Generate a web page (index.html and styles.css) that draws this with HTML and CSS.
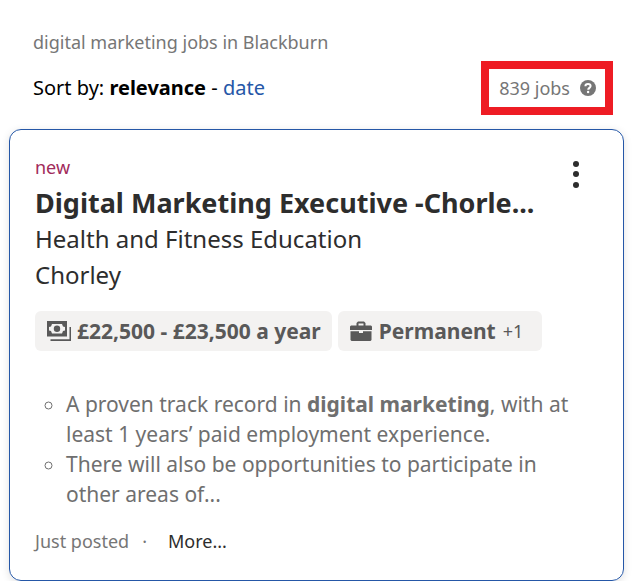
FILE: index.html
```html
<!doctype html>
<html lang="en">
<head>
<meta charset="utf-8">
<meta name="viewport" content="width=device-width, initial-scale=1.0">
<link rel="stylesheet" href="styles.css">
<title>digital marketing jobs in Blackburn</title>
</head>
<body>
<header class="results-header">
    <p class="search-title">digital marketing jobs in Blackburn</p>
    <div class="sort-row">
        <p class="sort">Sort by: <b>relevance</b> - <a href="#date">date</a></p>
        <div class="count">
            <span>839 jobs</span>
            <button class="icon-button" type="button" aria-label="Help">
                <svg width="16" height="16" viewBox="0 0 16 16">
                    <circle cx="8" cy="8" r="8" fill="#767676"/>
                    <path d="M5.400 6.200C5.400 4.600 6.500 3.900 8 3.900s2.600.8 2.600 2.200c0 1.700-2.400 1.900-2.400 3.700" fill="none" stroke="#fff" stroke-width="2"/>
                    <circle cx="8.100" cy="12" r="1.200" fill="#fff"/>
                </svg>
            </button>
        </div>
    </div>
</header>

<main class="job-card">
    <div class="job-top">
        <div class="job-heading">
            <span class="new">new</span>
            <h2 class="job-title">Digital Marketing Executive -Chorle...</h2>
            <p class="company">Health and Fitness Education</p>
            <p class="company">Chorley</p>
        </div>
        <button class="icon-button menu" type="button" aria-label="Job actions">
            <svg width="8" height="28" viewBox="0 0 8 28" fill="#2d2d2d">
                <circle cx="4" cy="4" r="3"/>
                <circle cx="4" cy="14" r="3"/>
                <circle cx="4" cy="25" r="3"/>
            </svg>
        </button>
    </div>

    <div class="tags">
        <div class="tag">
            <svg width="24" height="20" viewBox="0 0 24 20" fill="#595959">
                <path fill-rule="evenodd" d="M0 0h20v15.500H0zM5 3L4 5.500 2 6v3.500l2 .5L5 12.500h10l1-2.500 2-.5V6l-2-.5L15 3z"/>
                <circle cx="10" cy="7.700" r="3.200"/>
                <path d="M22.500 6H24v14H3.500v-1.800h19z"/>
            </svg>
            <b>£22,500 - £23,500 a year</b>
        </div>
        <div class="tag tag-type">
            <svg width="22" height="20" viewBox="0 0 22 20" fill="#595959">
                <path fill-rule="evenodd" d="M6.500 4.500V2L8 .5h6L15.500 2v2.500H21l1 1V9H0V5.500l1-1zM8.500 4.500h5v-2h-5z"/>
                <path d="M.5 10.300H9V12h4v-1.700h8.500V19l-1 1h-19l-1-1z"/>
            </svg>
            <b>Permanent</b>
            <span class="more-count">+1</span>
        </div>
    </div>

    <ul class="snippet">
        <li>A proven track record in <b>digital marketing</b>, with at least 1 years’ paid employment experience.</li>
        <li>There will also be opportunities to participate in other areas of...</li>
    </ul>

    <footer class="job-footer">
        <span>Just posted</span>
        <span>·</span>
        <button class="more" type="button">More...</button>
    </footer>
</main>
</body>
</html>
```
FILE: styles.css
```css
* {
    box-sizing: border-box;
}
body {
    margin: 0;
    padding: 30px 8px 0 9px;
    font-family: "Noto Sans", "Open Sans", sans-serif;
    font-size: 18px;
    line-height: 24px;
    color: #2d2d2d;
    background-color: #fff;
}
h2,
p,
ul {
    margin: 0;
    padding: 0;
}
button {
    padding: 0;
    border: 0;
    background: none;
    font: inherit;
    color: inherit;
    cursor: pointer;
}
svg {
    display: block;
    flex: none;
}
.results-header {
    padding: 0 11px 0 24px;
}
.search-title {
    color: #767676;
}
.sort-row {
    display: flex;
    justify-content: space-between;
    align-items: center;
    margin: 7px 0 14px;
}
.sort {
    font-size: 20px;
    line-height: 26px;
    color: #000;
}
.sort a {
    color: #2557a7;
    text-decoration: none;
}
.count {
    display: flex;
    align-items: center;
    gap: 10px;
    padding: 7px 9px 7px 10px;
    border: 8px solid #ee1c24;
    color: #767676;
}
.job-card {
    padding: 25px 25px 27px;
    border: 1px solid #2557a7;
    border-radius: 12px;
    box-shadow: 0 2px 8px rgba(0, 0, 0, 0.12);
}
.job-top {
    display: flex;
    justify-content: space-between;
    align-items: flex-start;
}
.job-heading {
    min-width: 0;
}
.new {
    display: block;
    margin-bottom: 6px;
    color: #a12b5b;
}
.job-title {
    font-size: 27px;
    line-height: 36px;
}
.company {
    font-size: 24px;
    line-height: 36px;
}
.menu {
    margin: 5px 18px 0 0;
}
.tags {
    display: flex;
    flex-wrap: wrap;
    gap: 6px;
    margin: 18px 0 38px;
}
.tag {
    display: flex;
    align-items: center;
    gap: 6px;
    height: 40px;
    padding: 0 11px 0 12px;
    border-radius: 6px;
    font-size: 21px;
    color: #595959;
    background-color: #f3f2f1;
}
.tag-type {
    gap: 7px;
    padding-right: 19px;
}
.more-count {
    font-size: 18px;
}
.snippet {
    padding: 0 20px 0 31px;
    font-size: 21px;
    line-height: 30px;
    color: #6f6f6f;
    list-style: circle;
}
.job-footer {
    display: flex;
    gap: 13px;
    margin-top: 20px;
    color: #767676;
}
.more {
    margin-left: 8px;
    color: #2d2d2d;
}
```
